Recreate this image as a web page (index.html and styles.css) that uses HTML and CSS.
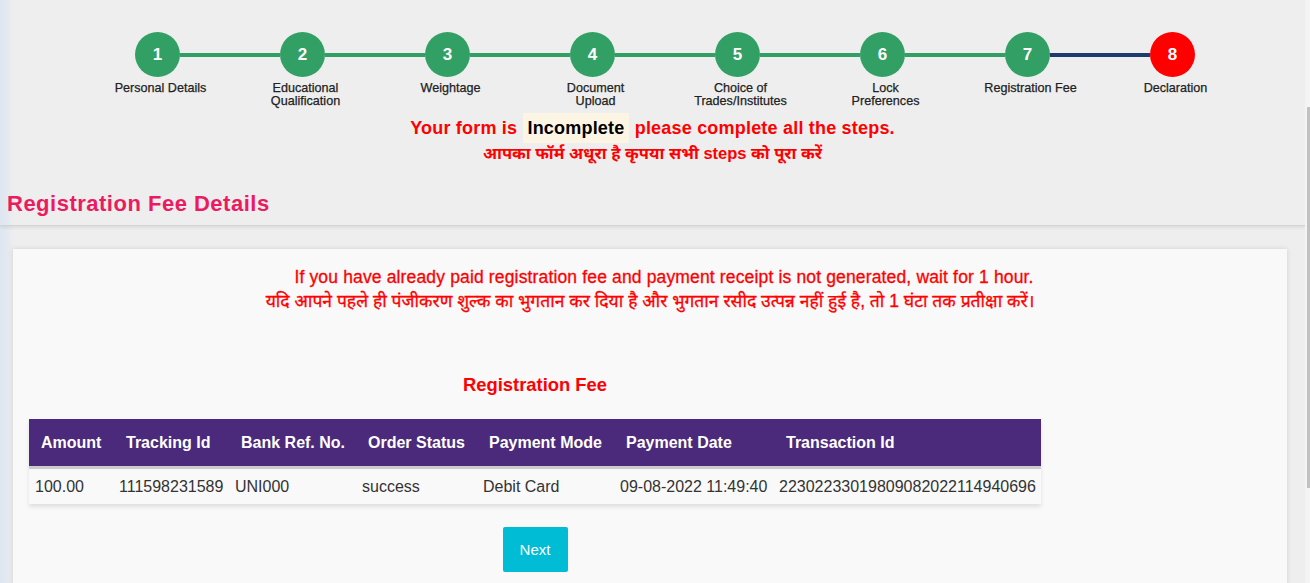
FILE: index.html
```html
<!DOCTYPE html>
<html lang="en">
<head>
<meta charset="utf-8">
<title>Registration Fee Details</title>
<link rel="stylesheet" href="styles.css">
</head>
<body>
<div class="page">
  <div class="track">
    <div class="circle">1</div><div class="line"></div>
    <div class="circle">2</div><div class="line"></div>
    <div class="circle">3</div><div class="line"></div>
    <div class="circle">4</div><div class="line"></div>
    <div class="circle">5</div><div class="line"></div>
    <div class="circle">6</div><div class="line"></div>
    <div class="circle">7</div><div class="line navy"></div>
    <div class="circle red">8</div>
  </div>
  <div class="labels">
    <div>Personal Details</div>
    <div>Educational<br>Qualification</div>
    <div>Weightage</div>
    <div>Document<br>Upload</div>
    <div>Choice of<br>Trades/Institutes</div>
    <div>Lock<br>Preferences</div>
    <div>Registration Fee</div>
    <div>Declaration</div>
  </div>

  <div class="status">
    <div class="status-en">Your form is <span class="incomplete">Incomplete</span> please complete all the steps.</div>
    <div class="status-hi">आपका फॉर्म अधूरा है कृपया सभी steps को पूरा करें</div>
  </div>

  <div class="section-head">
    <h2 class="section-title">Registration Fee Details</h2>
  </div>

  <div class="card">
    <div class="notice">
      <div class="notice-en">If you have already paid registration fee and payment receipt is not generated, wait for 1 hour.</div>
      <div class="notice-hi">यदि आपने पहले ही पंजीकरण शुल्क का भुगतान कर दिया है और भुगतान रसीद उत्पन्न नहीं हुई है, तो 1 घंटा तक प्रतीक्षा करें।</div>
    </div>

    <div class="fee-box">
      <h3 class="fee-title">Registration Fee</h3>
      <table class="fee-table">
        <colgroup>
          <col class="c1"><col class="c2"><col class="c3"><col class="c4"><col class="c5"><col class="c6"><col class="c7">
        </colgroup>
        <thead>
          <tr>
            <th>Amount</th>
            <th>Tracking Id</th>
            <th>Bank Ref. No.</th>
            <th>Order Status</th>
            <th>Payment Mode</th>
            <th>Payment Date</th>
            <th>Transaction Id</th>
          </tr>
        </thead>
        <tbody>
          <tr>
            <td>100.00</td>
            <td>111598231589</td>
            <td>UNI000</td>
            <td>success</td>
            <td>Debit Card</td>
            <td>09-08-2022 11:49:40</td>
            <td>22302233019809082022114940696</td>
          </tr>
        </tbody>
      </table>
      <div class="actions">
        <button class="btn-next" type="button">Next</button>
      </div>
    </div>
  </div>
</div>
<div class="scroll-track"><div class="scroll-thumb"></div></div>
</body>
</html>
```

FILE: styles.css
```css
html, body {
  margin: 0;
  padding: 0;
}

body {
  font-family: "Liberation Sans", Arial, "Noto Sans Devanagari", "Noto Sans", sans-serif;
  background: #eeeeee;
  overflow: hidden;
}

.page {
  width: 1305px;
  min-height: 583px;
  background: linear-gradient(to right, #dde6f2 0, #e4e9f0 7px, #eeeeee 15px);
}

/* stepper */
.track {
  display: flex;
  align-items: center;
  padding-top: 32px;
  margin-left: 135px;
}

.circle {
  width: 45px;
  height: 45px;
  border-radius: 50%;
  background: #32a064;
  color: #ffffff;
  font-weight: bold;
  font-size: 17px;
  display: flex;
  align-items: center;
  justify-content: center;
  flex: none;
}

.circle.red {
  background: #ff0000;
}

.line {
  width: 100px;
  height: 4px;
  background: #32a064;
  flex: none;
}

.line.navy {
  background: #1f3a6d;
}

.labels {
  display: grid;
  grid-template-columns: repeat(8, 145px);
  margin-left: 88px;
  margin-top: 5px;
  font-size: 12.6px;
  line-height: 13px;
  color: #222222;
  text-align: center;
  -webkit-text-stroke: 0.25px #222222;
}

/* status message */
.status {
  text-align: center;
  margin-top: 5px;
  color: #ff0000;
  font-weight: bold;
}

.status-en {
  font-size: 18px;
  line-height: 30px;
  letter-spacing: 0.2px;
}

.incomplete {
  display: inline-block;
  background: #fcf5e3;
  color: #000000;
  padding: 4px 4px;
  line-height: 22px;
  margin: 0 1px;
}

.status-hi {
  font-size: 16.5px;
  line-height: 20px;
}

/* section header */
.section-head {
  padding: 29px 0 9px 7px;
  border-bottom: 1px solid #d4d4d4;
  box-shadow: 0 2px 3px rgba(0, 0, 0, 0.07);
}

.section-title {
  margin: 0;
  font-size: 22px;
  line-height: 24px;
  letter-spacing: 0.5px;
  color: #ec1a5f;
  font-weight: bold;
}

/* card */
.card {
  margin: 23px 0 0 13px;
  width: 1274px;
  min-height: 340px;
  box-sizing: border-box;
  background: #f9f9f9;
  box-shadow: 0 0 5px rgba(0, 0, 0, 0.12);
  padding: 16px 16px 20px 16px;
}

.notice {
  text-align: center;
  color: #ff0000;
  font-size: 17.5px;
  line-height: 24px;
  -webkit-text-stroke: 0.3px #ff0000;
}

.notice-en {
  padding-left: 28px;
  letter-spacing: 0.15px;
}

.fee-box {
  width: 1012px;
}

.fee-title {
  margin: 60px 0 22px 0;
  text-align: center;
  color: #ff0000;
  font-size: 18.4px;
  line-height: 24px;
  font-weight: bold;
}

.fee-table {
  width: 1012px;
  border-collapse: collapse;
  table-layout: fixed;
  box-shadow: 0 3px 4px rgba(0, 0, 0, 0.1);
}

.c1 { width: 84px; }
.c2 { width: 116px; }
.c3 { width: 127px; }
.c4 { width: 121px; }
.c5 { width: 137px; }
.c6 { width: 159px; }
.c7 { width: 268px; }

.fee-table th {
  background: #4b2a7b;
  color: #ffffff;
  font-size: 16px;
  font-weight: bold;
  text-align: left;
  height: 47px;
  padding: 0 0 0 12px;
  border-bottom: 3px solid #cccccc;
  white-space: nowrap;
}

.fee-table th:nth-child(2) {
  padding-left: 13px;
}

.fee-table th:nth-child(7) {
  padding-left: 13px;
}

.fee-table td {
  font-size: 16px;
  color: #333333;
  height: 35px;
  padding: 0 0 0 6px;
  background: #f9f9f9;
  white-space: nowrap;
}

.actions {
  display: flex;
  justify-content: center;
  margin-top: 23px;
}

.btn-next {
  width: 65px;
  height: 45px;
  border: none;
  border-radius: 2px;
  background: #00bcd4;
  color: #ffffff;
  font-family: "Liberation Sans", Arial, sans-serif;
  font-size: 15px;
  padding: 0;
}

/* fake scrollbar overlay */
.scroll-track {
  position: fixed;
  top: 0;
  right: 0;
  width: 5px;
  height: 100%;
  background: #f4f4f4;
}

.scroll-thumb {
  position: absolute;
  top: 107px;
  right: 0;
  width: 3px;
  height: 381px;
  background: #c1c1c1;
}
```
